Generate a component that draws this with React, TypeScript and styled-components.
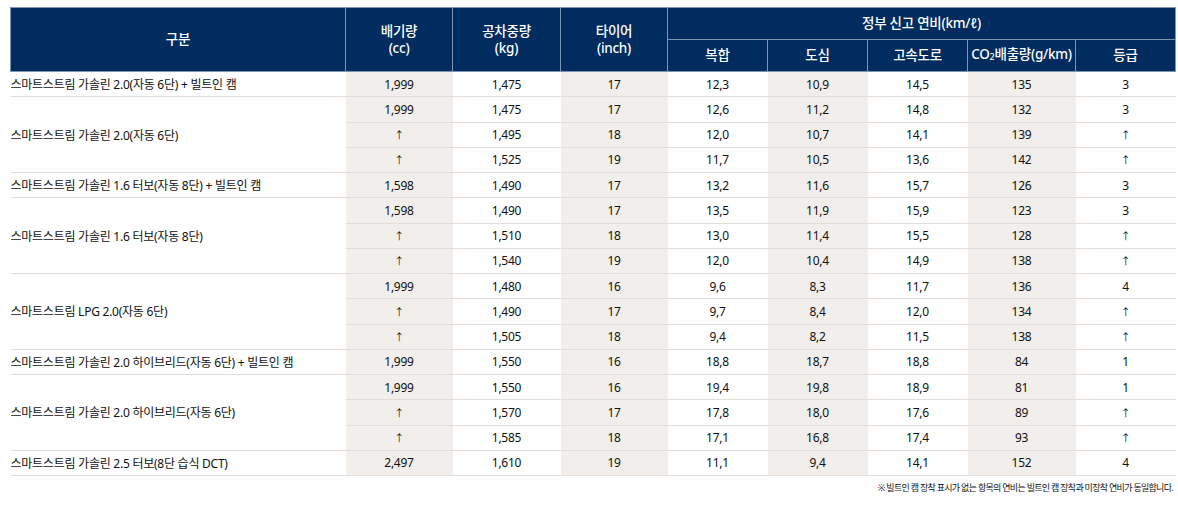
import React from "react";
import styled, { createGlobalStyle } from "styled-components";

const GlobalStyle = createGlobalStyle`
  body {
    margin: 0;
    background: #fff;
    font-family: "Noto Sans", "Noto Sans CJK KR", sans-serif;
    color: #111;
  }
`;

const Wrapper = styled.div`
  padding: 7px 3px 0 10px;
  width: 1165px;
`;

const Table = styled.table`
  width: 1165px;
  border-collapse: collapse;
  table-layout: fixed;
  font-size: 12px;
  letter-spacing: -0.25px;
`;

const Th = styled.th`
  background: #002c5f;
  color: #fff;
  font-weight: 500;
  font-size: 13.5px;
  line-height: 17px;
  border: 1px solid #7f95b2;
  height: 31px;
  padding: 0;
  text-align: center;
`;

const Tr = styled.tr`
  height: 25.25px;
`;

const Td = styled.td<{ $shade?: boolean; $left?: boolean }>`
  padding: 0;
  text-align: ${(p) => (p.$left ? "left" : "center")};
  background: ${(p) => (p.$shade ? "#f1eeeb" : "#fff")};
  border-bottom: 1px solid #e2ddd8;
  white-space: nowrap;
`;

const Sub = styled.sub`
  font-size: 9px;
  vertical-align: -1px;
`;

const Arrow = styled.span`
  font-size: 10px;
`;

const Note = styled.p`
  margin: 5px 2px 0 0;
  text-align: right;
  font-size: 9px;
  letter-spacing: -0.7px;
  color: #111;
`;

type Row = string[];
type Group = { name: string; rows: Row[] };

const groups: Group[] = [
  { name: "스마트스트림 가솔린 2.0(자동 6단) + 빌트인 캠", rows: [["1,999", "1,475", "17", "12.3", "10.9", "14.5", "135", "3"]] },
  {
    name: "스마트스트림 가솔린 2.0(자동 6단)",
    rows: [
      ["1,999", "1,475", "17", "12.6", "11.2", "14.8", "132", "3"],
      ["↑", "1,495", "18", "12.0", "10.7", "14.1", "139", "↑"],
      ["↑", "1,525", "19", "11.7", "10.5", "13.6", "142", "↑"],
    ],
  },
  { name: "스마트스트림 가솔린 1.6 터보(자동 8단) + 빌트인 캠", rows: [["1,598", "1,490", "17", "13.2", "11.6", "15.7", "126", "3"]] },
  {
    name: "스마트스트림 가솔린 1.6 터보(자동 8단)",
    rows: [
      ["1,598", "1,490", "17", "13.5", "11.9", "15.9", "123", "3"],
      ["↑", "1,510", "18", "13.0", "11.4", "15.5", "128", "↑"],
      ["↑", "1,540", "19", "12.0", "10.4", "14.9", "138", "↑"],
    ],
  },
  {
    name: "스마트스트림 LPG 2.0(자동 6단)",
    rows: [
      ["1,999", "1,480", "16", "9.6", "8.3", "11.7", "136", "4"],
      ["↑", "1,490", "17", "9.7", "8.4", "12.0", "134", "↑"],
      ["↑", "1,505", "18", "9.4", "8.2", "11.5", "138", "↑"],
    ],
  },
  { name: "스마트스트림 가솔린 2.0 하이브리드(자동 6단) + 빌트인 캠", rows: [["1,999", "1,550", "16", "18.8", "18.7", "18.8", "84", "1"]] },
  {
    name: "스마트스트림 가솔린 2.0 하이브리드(자동 6단)",
    rows: [
      ["1,999", "1,550", "16", "19.4", "19.8", "18.9", "81", "1"],
      ["↑", "1,570", "17", "17.8", "18.0", "17.6", "89", "↑"],
      ["↑", "1,585", "18", "17.1", "16.8", "17.4", "93", "↑"],
    ],
  },
  { name: "스마트스트림 가솔린 2.5 터보(8단 습식 DCT)", rows: [["2,497", "1,610", "19", "11.1", "9.4", "14.1", "152", "4"]] },
];

const widths = [335, 107, 108, 107, 100, 100, 100, 108, 100];
const shaded = [true, false, true, false, true, false, true, false];

const fmt = (v: string) => (v === "↑" ? <Arrow>↑</Arrow> : v.replace(".", ","));

export default function App() {
  return (
    <>
      <GlobalStyle />
      <Wrapper>
        <Table>
          <colgroup>
            {widths.map((w, i) => (
              <col key={i} width={w} />
            ))}
          </colgroup>
          <thead>
            <tr>
              <Th rowSpan={2}>구분</Th>
              <Th rowSpan={2}>
                배기량
                <br />
                (cc)
              </Th>
              <Th rowSpan={2}>
                공차중량
                <br />
                (kg)
              </Th>
              <Th rowSpan={2}>
                타이어
                <br />
                (inch)
              </Th>
              <Th colSpan={5}>정부 신고 연비(km/ℓ)</Th>
            </tr>
            <tr>
              <Th>복합</Th>
              <Th>도심</Th>
              <Th>고속도로</Th>
              <Th>
                CO<Sub>2</Sub>배출량(g/km)
              </Th>
              <Th>등급</Th>
            </tr>
          </thead>
          <tbody>
            {groups.map((g) =>
              g.rows.map((r, ri) => (
                <Tr key={g.name + ri}>
                  {ri === 0 && (
                    <Td $left rowSpan={g.rows.length}>
                      {g.name}
                    </Td>
                  )}
                  {r.map((v, ci) => (
                    <Td key={ci} $shade={shaded[ci]}>
                      {fmt(v)}
                    </Td>
                  ))}
                </Tr>
              ))
            )}
          </tbody>
        </Table>
        <Note>※ 빌트인 캠 장착 표시가 없는 항목의 연비는 빌트인 캠 장착과 미장착 연비가 동일합니다.</Note>
      </Wrapper>
    </>
  );
}
